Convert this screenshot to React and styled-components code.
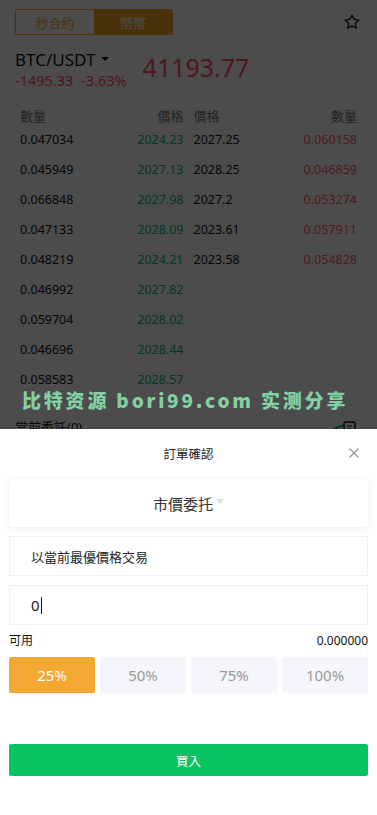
import React from 'react'
import styled, { createGlobalStyle } from 'styled-components'

const GlobalStyle = createGlobalStyle`
  html, body {
    margin: 0;
    padding: 0;
    background: #fff;
  }
  body {
    font-family: "Noto Sans", "Noto Sans CJK TC", sans-serif;
    color: #222;
    overflow: hidden;
  }
`;

const Page = styled.div`
  width: 377px;
  height: 815px;
  position: relative;
  overflow: hidden;
`;

const TopBar = styled.div`
  display: flex;
  align-items: center;
  justify-content: space-between;
  padding: 9px 16px 0 15px;
`;

const Tabs = styled.div`
  display: flex;
  width: 158px;
  height: 26px;
  border: 1px solid #f5a623;
  border-radius: 2px;
  box-sizing: border-box;
  overflow: hidden;
`;

const Tab = styled.div`
  flex: 1;
  display: flex;
  align-items: center;
  justify-content: center;
  font-size: 13px;
  color: ${p => (p.active ? '#fff' : '#f5a623')};
  background: ${p => (p.active ? '#f5a623' : '#fff')};
`;

const PairRow = styled.div`
  display: flex;
  align-items: center;
  padding: 14px 15px 0;
  gap: 16px;
`;

const PairInfo = styled.div`
  display: flex;
  flex-direction: column;
`;

const PairName = styled.div`
  display: flex;
  align-items: center;
  gap: 6px;
  font-size: 17px;
  line-height: 22px;
  color: #111;
`;

const Caret = styled.span`
  width: 0;
  height: 0;
  border-left: 4px solid transparent;
  border-right: 4px solid transparent;
  border-top: 4px solid #111;
  margin-top: -2px;
`;

const Change = styled.div`
  font-size: 14.5px;
  line-height: 18px;
  color: #ff4d5a;
  word-spacing: 4px;
`;

const LastPrice = styled.div`
  font-size: 25px;
  color: #ff4d5a;
  margin-top: -4px;
`;

const Book = styled.div`
  display: grid;
  grid-template-columns: 1fr 1fr;
  column-gap: 10px;
  padding: 19px 20px 0 20px;
`;

const Side = styled.div`
  display: flex;
  flex-direction: column;
`;

const BookHead = styled.div`
  display: flex;
  justify-content: space-between;
  font-size: 13px;
  line-height: 16px;
  color: #777;
`;

const BookRow = styled.div`
  display: flex;
  justify-content: space-between;
  height: 30px;
  align-items: center;
  font-size: 12.5px;
`;

const Cell = styled.span`
  color: ${p => p.color || '#111'};
`;

const Orders = styled.div`
  display: flex;
  justify-content: space-between;
  align-items: flex-start;
  padding: 25px 18px 0 15px;
  font-size: 13px;
  line-height: 16px;
  color: #111;
`;

const Mask = styled.div`
  position: absolute;
  inset: 0;
  background: rgba(0, 0, 0, 0.7);
`;

const Watermark = styled.div`
  position: absolute;
  left: 22px;
  top: 387px;
  font-size: 19px;
  line-height: 26px;
  font-weight: 900;
  color: #82d1a1;
  letter-spacing: 2.8px;
  white-space: nowrap;
  font-family: "Noto Sans CJK SC", "Noto Sans", sans-serif;
`;

const Sheet = styled.div`
  position: absolute;
  left: 0;
  right: 0;
  bottom: 0;
  height: 386px;
  background: #fff;
  display: flex;
  flex-direction: column;
  padding: 0 9px;
  box-sizing: border-box;
`;

const SheetHead = styled.div`
  position: relative;
  height: 48px;
  display: flex;
  align-items: center;
  justify-content: center;
  font-size: 12.5px;
  color: #222;
`;

const Close = styled.span`
  position: absolute;
  right: 8px;
  top: 17px;
  width: 12px;
  height: 12px;
`;

const Select = styled.div`
  height: 48px;
  margin-top: 2px;
  display: flex;
  align-items: center;
  justify-content: center;
  gap: 3px;
  font-size: 15px;
  color: #333;
  box-shadow: 0 1px 8px rgba(0, 0, 0, 0.08);
`;

const SmallCaret = styled.span`
  width: 0;
  height: 0;
  border-left: 4px solid transparent;
  border-right: 4px solid transparent;
  border-top: 5px solid #ddd;
  margin-top: -3px;
`;

const Field = styled.div`
  height: 40px;
  margin-top: 9px;
  border: 1px solid #eef0f6;
  box-sizing: border-box;
  display: flex;
  align-items: center;
  padding-left: 21px;
  font-size: ${p => p.size || 13}px;
  color: #222;
`;

const Cursor = styled.span`
  display: inline-block;
  width: 1px;
  height: 17px;
  background: #111;
  margin-left: 1px;
`;

const Avail = styled.div`
  display: flex;
  justify-content: space-between;
  font-size: 12px;
  line-height: 16px;
  margin-top: 8px;
  color: #111;
`;

const Percents = styled.div`
  display: grid;
  grid-template-columns: repeat(4, 1fr);
  gap: 5px;
  margin-top: 8px;
`;

const Pct = styled.div`
  height: 36px;
  display: flex;
  align-items: center;
  justify-content: center;
  font-size: 15px;
  border-radius: 2px;
  color: ${p => (p.active ? '#fff' : '#999')};
  background: ${p => (p.active ? '#f4a834' : '#f5f6fa')};
`;

const BuyButton = styled.div`
  height: 32px;
  margin-top: 51px;
  background: #08c362;
  border-radius: 2px;
  color: #fff;
  font-size: 12.5px;
  display: flex;
  align-items: center;
  justify-content: center;
`;

const bids = [
  ['0.047034', '2024.23'],
  ['0.045949', '2027.13'],
  ['0.066848', '2027.98'],
  ['0.047133', '2028.09'],
  ['0.048219', '2024.21'],
  ['0.046992', '2027.82'],
  ['0.059704', '2028.02'],
  ['0.046696', '2028.44'],
  ['0.058583', '2028.57'],
]

const asks = [
  ['2027.25', '0.060158'],
  ['2028.25', '0.046859'],
  ['2027.2', '0.053274'],
  ['2023.61', '0.057911'],
  ['2023.58', '0.054828'],
]

const Star = () => (
  <svg width="18" height="18" viewBox="0 0 24 24" fill="none" stroke="#111" strokeWidth="1.8" strokeLinejoin="round">
    <path d="M12 2.8l2.8 5.8 6.3.9-4.6 4.4 1.1 6.3L12 17.2l-5.6 3 1.1-6.3L2.9 9.5l6.3-.9z" />
  </svg>
)

const OrdersIcon = () => (
  <svg width="30" height="16" viewBox="0 0 30 16" fill="none">
    <path d="M2 14c3-5 8-7 12-7" stroke="#0fa3a8" strokeWidth="2" />
    <rect x="15" y="3" width="11" height="11" rx="1.5" stroke="#111" strokeWidth="1.5" />
    <path d="M18 7h5M18 10h4" stroke="#111" strokeWidth="1.2" />
  </svg>
)

export default function App() {
  return (
    <Page>
      <GlobalStyle />
      <TopBar>
        <Tabs>
          <Tab>秒合約</Tab>
          <Tab active>幣幣</Tab>
        </Tabs>
        <Star />
      </TopBar>
      <PairRow>
        <PairInfo>
          <PairName>BTC/USDT <Caret /></PairName>
          <Change>-1495.33 -3.63%</Change>
        </PairInfo>
        <LastPrice>41193.77</LastPrice>
      </PairRow>
      <Book>
        <Side>
          <BookHead><span>數量</span><span>價格</span></BookHead>
          {bids.map(([q, p]) => (
            <BookRow key={q}>
              <Cell>{q}</Cell>
              <Cell color="#05b386">{p}</Cell>
            </BookRow>
          ))}
        </Side>
        <Side>
          <BookHead><span>價格</span><span>數量</span></BookHead>
          {asks.map(([p, q]) => (
            <BookRow key={q}>
              <Cell>{p}</Cell>
              <Cell color="#ff5a5f">{q}</Cell>
            </BookRow>
          ))}
        </Side>
      </Book>
      <Orders>
        <span>當前委託(0)</span>
        <OrdersIcon />
      </Orders>
      <Mask />
      <Watermark>比特资源 bori99.com 实测分享</Watermark>
      <Sheet>
        <SheetHead>
          訂單確認
          <Close>
            <svg width="12" height="12" viewBox="0 0 12 12" stroke="#999" strokeWidth="1.3">
              <path d="M1.5 1.5l9 9M10.5 1.5l-9 9" />
            </svg>
          </Close>
        </SheetHead>
        <Select>市價委托 <SmallCaret /></Select>
        <Field>以當前最優價格交易</Field>
        <Field size={15}>0<Cursor /></Field>
        <Avail><span>可用</span><span>0.000000</span></Avail>
        <Percents>
          <Pct active>25%</Pct>
          <Pct>50%</Pct>
          <Pct>75%</Pct>
          <Pct>100%</Pct>
        </Percents>
        <BuyButton>買入</BuyButton>
      </Sheet>
    </Page>
  )
}
